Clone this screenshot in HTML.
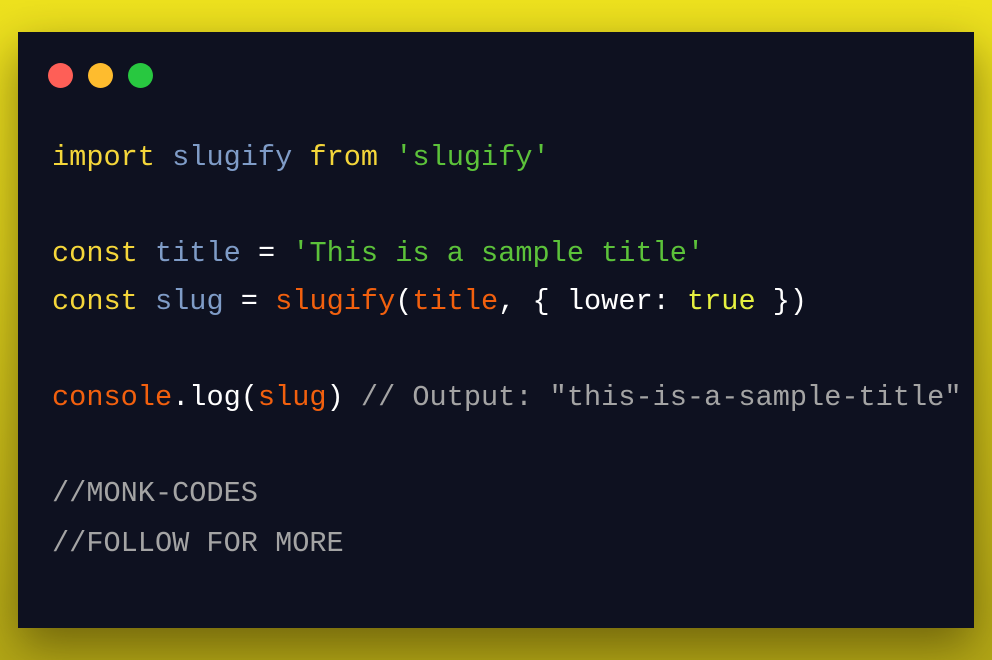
<!DOCTYPE html>
<html><head><meta charset="utf-8"><style>
html,body{margin:0;padding:0;}
body{width:992px;height:660px;overflow:hidden;position:relative;
background:linear-gradient(180deg,#eee21e 0%,#ddd01c 40%,#b4a816 100%);}
.card{position:absolute;left:18px;top:32px;width:956px;height:596px;background:#0e1120;box-shadow:0 18px 45px rgba(40,30,0,0.5);}
.dot{position:absolute;top:63px;width:25px;height:25px;border-radius:50%;}
.l{position:absolute;left:52px;height:48px;line-height:48px;font-family:"Liberation Mono",monospace;font-size:28.6px;white-space:pre;color:#fff;}
.k{color:#f4d63a}.i{color:#7f9cc7}.s{color:#5cc23a}.o{color:#f2600e}.t{color:#e6f040}.c{color:#a4a4a4}.w{color:#fff}
</style></head><body>
<div class="card"></div>
<div class="dot" style="left:48px;background:#fe5f57"></div>
<div class="dot" style="left:88px;background:#febc2e"></div>
<div class="dot" style="left:128px;background:#28c840"></div>
<div class="l" style="top:134px"><span class="k">import</span> <span class="i">slugify</span> <span class="k">from</span> <span class="s">'slugify'</span></div>
<div class="l" style="top:230px"><span class="k">const</span> <span class="i">title</span> <span class="w">=</span> <span class="s">'This is a sample title'</span></div>
<div class="l" style="top:278px"><span class="k">const</span> <span class="i">slug</span> <span class="w">=</span> <span class="o">slugify</span><span class="w">(</span><span class="o">title</span><span class="w">, { lower: </span><span class="t">true</span><span class="w"> })</span></div>
<div class="l" style="top:374px"><span class="o">console</span><span class="w">.log(</span><span class="o">slug</span><span class="w">)</span> <span class="c">// Output: "this-is-a-sample-title"</span></div>
<div class="l c" style="top:470px">//MONK-CODES</div>
<div class="l c" style="top:520px">//FOLLOW FOR MORE</div>
</body></html>
